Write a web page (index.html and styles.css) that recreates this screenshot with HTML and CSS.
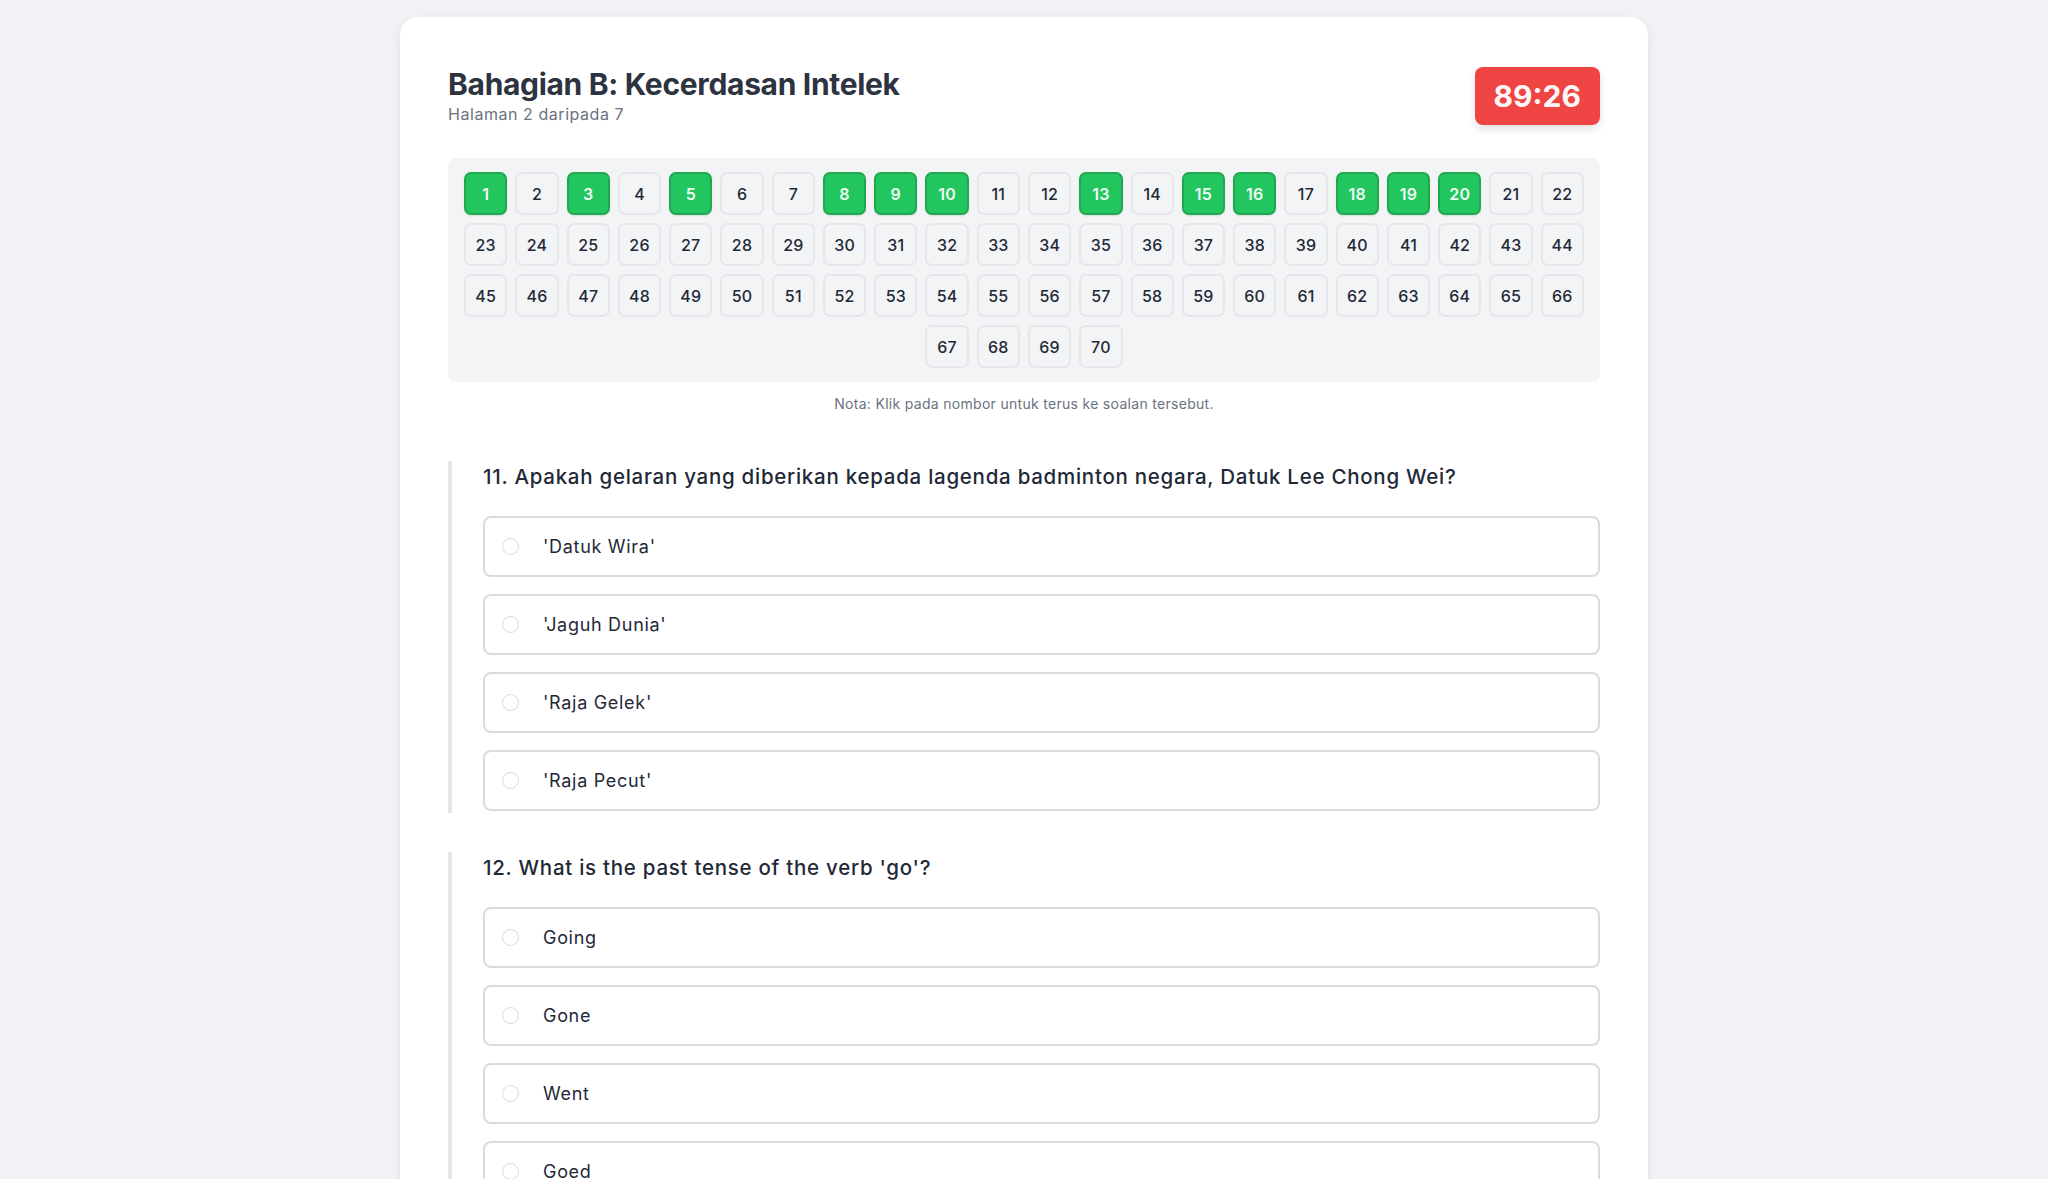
FILE: index.html
```html
<!DOCTYPE html>
<html lang="ms">
<head>
<meta charset="utf-8">
<title>Bahagian B: Kecerdasan Intelek</title>
<link rel="stylesheet" href="styles.css">
</head>
<body>
<main class="card">
  <header class="header">
    <div class="titles">
      <h1 class="title">Bahagian B: Kecerdasan Intelek</h1>
      <p class="subtitle">Halaman 2 daripada 7</p>
    </div>
    <div class="timer">89:26</div>
  </header>

  <nav class="grid">
    <button class="num done">1</button><button class="num">2</button><button class="num done">3</button><button class="num">4</button><button class="num done">5</button><button class="num">6</button><button class="num">7</button><button class="num done">8</button><button class="num done">9</button><button class="num done">10</button><button class="num">11</button><button class="num">12</button><button class="num done">13</button><button class="num">14</button><button class="num done">15</button><button class="num done">16</button><button class="num">17</button><button class="num done">18</button><button class="num done">19</button><button class="num done">20</button><button class="num">21</button><button class="num">22</button>
    <button class="num">23</button><button class="num">24</button><button class="num">25</button><button class="num">26</button><button class="num">27</button><button class="num">28</button><button class="num">29</button><button class="num">30</button><button class="num">31</button><button class="num">32</button><button class="num">33</button><button class="num">34</button><button class="num">35</button><button class="num">36</button><button class="num">37</button><button class="num">38</button><button class="num">39</button><button class="num">40</button><button class="num">41</button><button class="num">42</button><button class="num">43</button><button class="num">44</button>
    <button class="num">45</button><button class="num">46</button><button class="num">47</button><button class="num">48</button><button class="num">49</button><button class="num">50</button><button class="num">51</button><button class="num">52</button><button class="num">53</button><button class="num">54</button><button class="num">55</button><button class="num">56</button><button class="num">57</button><button class="num">58</button><button class="num">59</button><button class="num">60</button><button class="num">61</button><button class="num">62</button><button class="num">63</button><button class="num">64</button><button class="num">65</button><button class="num">66</button>
    <button class="num">67</button><button class="num">68</button><button class="num">69</button><button class="num">70</button>
  </nav>
  <p class="note">Nota: Klik pada nombor untuk terus ke soalan tersebut.</p>

  <section class="questions">
    <div class="question">
      <h2 class="q-title">11. Apakah gelaran yang diberikan kepada lagenda badminton negara, Datuk Lee Chong Wei?</h2>
      <div class="options">
        <label class="option"><span class="radio"></span><span class="opt-text">'Datuk Wira'</span></label>
        <label class="option"><span class="radio"></span><span class="opt-text">'Jaguh Dunia'</span></label>
        <label class="option"><span class="radio"></span><span class="opt-text">'Raja Gelek'</span></label>
        <label class="option"><span class="radio"></span><span class="opt-text">'Raja Pecut'</span></label>
      </div>
    </div>
    <div class="question">
      <h2 class="q-title">12. What is the past tense of the verb 'go'?</h2>
      <div class="options">
        <label class="option"><span class="radio"></span><span class="opt-text">Going</span></label>
        <label class="option"><span class="radio"></span><span class="opt-text">Gone</span></label>
        <label class="option"><span class="radio"></span><span class="opt-text">Went</span></label>
        <label class="option"><span class="radio"></span><span class="opt-text">Goed</span></label>
      </div>
    </div>
  </section>
</main>
</body>
</html>
```

FILE: styles.css
```css
* { box-sizing: border-box; }

html, body { margin: 0; padding: 0; }

body {
  background: #f0f2f5;
  font-family: Inter, "Noto Sans", "Liberation Sans", sans-serif;
  color: #1f2937;
  padding: 17px 16px 40px;
}

.card {
  max-width: 1248px;
  margin: 0 auto;
  background: #ffffff;
  border-radius: 18px;
  box-shadow: 0 4px 14px rgba(15, 23, 42, 0.06), 0 1px 3px rgba(15, 23, 42, 0.04);
  padding: 49px 48px 48px;
}

.header {
  display: flex;
  justify-content: space-between;
  align-items: center;
}

.title {
  margin: 0;
  font-size: 30px;
  line-height: 36px;
  font-weight: 700;
  color: #2d3340;
  letter-spacing: -0.32px;
}

.subtitle {
  margin: 0;
  font-size: 16px;
  line-height: 24px;
  color: #6b7280;
  letter-spacing: 0.55px;
}

.timer {
  background: #ef4444;
  color: #fff7f7;
  font-size: 30px;
  line-height: 36px;
  font-weight: 700;
  padding: 11px 19px;
  border-radius: 8px;
  box-shadow: 0 4px 8px rgba(0, 0, 0, 0.12);
}

.grid {
  margin-top: 32px;
  background: #f3f4f6;
  border-radius: 8px;
  padding: 14px 16px;
  display: flex;
  flex-wrap: wrap;
  justify-content: center;
  gap: 8px;
}

.num {
  width: 43.27px;
  height: 43px;
  padding: 0;
  border: 2px solid #e5e7eb;
  border-radius: 7px;
  background: #f3f4f6;
  font-family: inherit;
  font-size: 16px;
  font-weight: 500;
  color: #1f2937;
  letter-spacing: 0.2px;
  display: flex;
  align-items: center;
  justify-content: center;
}

.num.done {
  background: #22c55e;
  border-color: #1fa850;
  color: #ecfdf3;
  font-weight: 600;
  box-shadow: 0 1px 2px rgba(0, 0, 0, 0.1);
}

.note {
  margin: 12px 0 0;
  text-align: center;
  font-size: 14px;
  line-height: 20px;
  color: #6b7280;
  letter-spacing: 0.3px;
}

.questions {
  margin-top: 47px;
}

.question {
  border-left: 4px solid #e5e7eb;
  padding: 2px 0 2px 31px;
  margin-bottom: 39px;
}

.q-title {
  margin: 0 0 25px;
  font-size: 20.5px;
  line-height: 28px;
  font-weight: 500;
  color: #1f2937;
  letter-spacing: 0.73px;
}

.options {
  display: flex;
  flex-direction: column;
  gap: 17px;
}

.option {
  display: flex;
  align-items: center;
  border: 2px solid #d9dbe0;
  border-radius: 8px;
  padding: 14px 17px;
  background: #ffffff;
}

.radio {
  width: 17px;
  height: 17px;
  border-radius: 50%;
  border: 1px solid #d7d9de;
  background: #fff;
  margin-right: 24px;
  flex: none;
}

.opt-text {
  font-size: 18px;
  line-height: 29px;
  color: #1f2937;
  letter-spacing: 0.7px;
}
```
